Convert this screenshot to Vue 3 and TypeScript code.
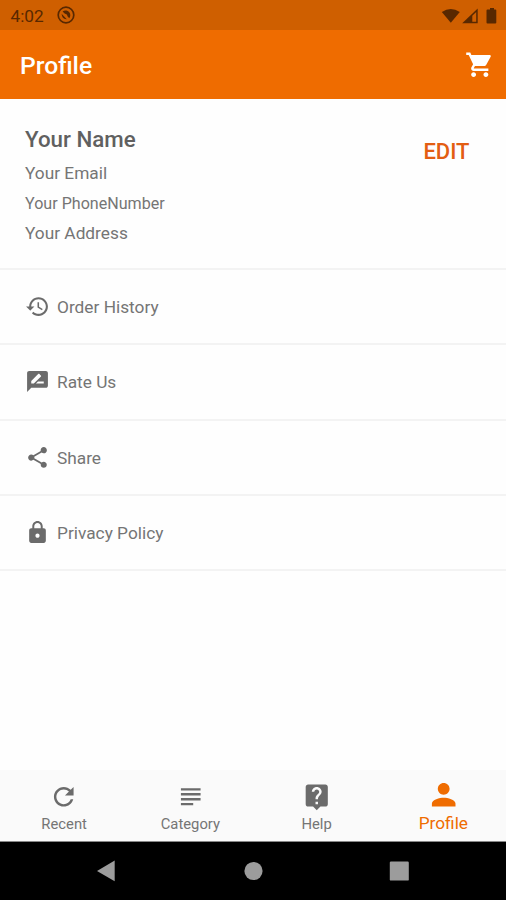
<script setup lang="ts">
interface Item { label: string; icon: string; name: string }

const menu: Item[] = [
  { name: 'history', label: 'Order History', icon: 'M13 3c-4.97 0-9 4.03-9 9H1l3.89 3.89.07.14L9 12H6c0-3.87 3.13-7 7-7s7 3.13 7 7-3.13 7-7 7c-1.93 0-3.68-.79-4.94-2.06l-1.42 1.42C8.27 19.99 10.51 21 13 21c4.97 0 9-4.03 9-9s-4.03-9-9-9zm-1 5v5l4.28 2.54.72-1.21-3.5-2.08V8H12z' },
  { name: 'rate', label: 'Rate Us', icon: 'M20 2H4c-1.1 0-1.99.9-1.99 2L2 22l4-4h14c1.1 0 2-.9 2-2V4c0-1.1-.9-2-2-2zM6 14v-2.47l6.88-6.88c.2-.2.51-.2.71 0l1.77 1.77c.2.2.2.51 0 .71L8.47 14H6zm12 0h-7.5l2-2H18v2z' },
  { name: 'share', label: 'Share', icon: 'M18 16.08c-.76 0-1.44.3-1.96.77L8.91 12.7c.05-.23.09-.46.09-.7s-.04-.47-.09-.7l7.05-4.11c.54.5 1.25.81 2.04.81 1.66 0 3-1.34 3-3s-1.34-3-3-3-3 1.34-3 3c0 .24.04.47.09.7L8.04 9.81C7.5 9.31 6.79 9 6 9c-1.66 0-3 1.34-3 3s1.34 3 3 3c.79 0 1.5-.31 2.04-.81l7.12 4.16c-.05.21-.08.43-.08.65 0 1.61 1.31 2.92 2.92 2.92s2.92-1.31 2.92-2.92-1.31-2.92-2.92-2.92z' },
  { name: 'privacy', label: 'Privacy Policy', icon: 'M18 8h-1V6c0-2.76-2.24-5-5-5S7 3.24 7 6v2H6c-1.1 0-2 .9-2 2v10c0 1.1.9 2 2 2h12c1.1 0 2-.9 2-2V10c0-1.1-.9-2-2-2zm-6 9c-1.1 0-2-.9-2-2s.9-2 2-2 2 .9 2 2-.9 2-2 2zm3.1-9H8.9V6c0-1.71 1.39-3.1 3.1-3.1 1.71 0 3.1 1.39 3.1 3.1v2z' },
]

const tabs: Item[] = [
  { name: 'recent', label: 'Recent', icon: 'M17.65 6.35C16.2 4.9 14.21 4 12 4c-4.42 0-7.99 3.58-7.99 8s3.57 8 7.99 8c3.73 0 6.84-2.55 7.73-6h-2.08c-.82 2.33-3.04 4-5.65 4-3.31 0-6-2.69-6-6s2.69-6 6-6c1.66 0 3.14.69 4.22 1.78L13 11h7V4l-2.35 2.35z' },
  { name: 'category', label: 'Category', icon: 'M14 17H4v2h10v-2zm6-8H4v2h16V9zM4 15h16v-2H4v2zM4 5v2h16V5H4z' },
  { name: 'help', label: 'Help', icon: 'M19 2H5c-1.11 0-2 .9-2 2v14c0 1.1.89 2 2 2h4l3 3 3-3h4c1.1 0 2-.9 2-2V4c0-1.1-.9-2-2-2zm-6 16h-2v-2h2v2zm2.07-7.75l-.9.92C13.45 11.9 13 12.5 13 14h-2v-.5c0-1.1.45-2.1 1.17-2.83l1.24-1.26c.37-.36.59-.86.59-1.41 0-1.1-.9-2-2-2s-2 .9-2 2H8c0-2.21 1.79-4 4-4s4 1.79 4 4c0 .88-.36 1.68-.93 2.25z' },
  { name: 'profile', label: 'Profile', icon: 'M12 12c2.21 0 4-1.79 4-4s-1.79-4-4-4-4 1.79-4 4 1.79 4 4 4zm0 2c-2.67 0-8 1.34-8 4v2h16v-2c0-2.66-5.33-4-8-4z' },
]
const active = 'profile'
</script>

<template>
  <div class="screen">
    <div class="status">
      <span class="clock">4:02</span>
      <svg class="notice" viewBox="0 0 18 18">
        <circle cx="9" cy="9" r="7.8" fill="none" stroke="currentColor" stroke-width="1.7" />
        <path d="M5.6 5.4C8.6 3.2 13.4 5.2 13.3 9.2Q13.3 10.8 12.3 12.2L10.8 10.8Q10.4 8.2 7.6 7.6ZM4.6 7.8L9.8 13.2Q5 13.6 4.6 7.8Z" fill="currentColor" />
      </svg>
      <svg class="signals" viewBox="0 0 56 18">
        <path d="M.8 5Q9.8 -1.2 18.8 5L9.8 15.8Z" fill="currentColor" />
        <path d="M36.7 1.5V16.3H21.2Z" fill="currentColor" />
        <path d="M31.3 8.8L35.2 5V14.8H31.3Z" class="signal-gap" />
        <path d="M46.5 2.6H49V1h4v1.6h1.5q.8 0 .8 1v12q0 1-1 1h-7.8q-1 0-1-1v-12q0-1 1-1Z" fill="currentColor" />
      </svg>
    </div>

    <header class="appbar">
      <h1>Profile</h1>
      <svg class="cart" viewBox="0 0 24 24"><path d="M7 18c-1.1 0-1.99.9-1.99 2S5.9 22 7 22s2-.9 2-2-.9-2-2-2zM1 2v2h2l3.6 7.59-1.35 2.45c-.16.28-.25.61-.25.96 0 1.1.9 2 2 2h12v-2H7.42c-.14 0-.25-.11-.25-.25l.03-.12.9-1.63h7.45c.75 0 1.41-.41 1.75-1.03l3.58-6.49c.08-.14.12-.31.12-.48 0-.55-.45-1-1-1H5.21l-.94-2H1zm16 16c-1.1 0-1.99.9-1.99 2s.89 2 1.99 2 2-.9 2-2-.9-2-2-2z" /></svg>
    </header>

    <section class="account">
      <div class="details">
        <h2>Your Name</h2>
        <p>Your Email</p>
        <p class="phone">Your PhoneNumber</p>
        <p>Your Address</p>
      </div>
      <button class="edit">EDIT</button>
    </section>

    <main class="menu">
      <div v-for="item in menu" :key="item.name" class="row">
        <svg viewBox="0 0 24 24"><path :d="item.icon" /></svg>
        <span>{{ item.label }}</span>
      </div>
    </main>

    <nav class="tabs">
      <div v-for="tab in tabs" :key="tab.name" class="tab" :class="{ active: tab.name === active }">
        <svg viewBox="0 0 24 24"><path :d="tab.icon" /></svg>
        <span>{{ tab.label }}</span>
      </div>
    </nav>

    <div class="system">
      <svg viewBox="0 0 20 22"><path d="M17.7 .6V21.2L0 10.9Z" /></svg>
      <svg viewBox="0 0 20 22"><circle cx="10.5" cy="11" r="9.1" /></svg>
      <svg viewBox="0 0 20 22"><rect x=".8" y="1.6" width="19" height="19" rx="1.2" /></svg>
    </div>
  </div>
</template>

<style>
body { margin: 0; }
</style>

<style scoped>
.screen {
  width: 506px;
  height: 900px;
  display: flex;
  flex-direction: column;
  background: #fefefe;
  color: #757575;
  font-family: Roboto, "Liberation Sans", sans-serif;
  font-size: 17.3px;
  overflow: hidden;
}
svg { display: block; flex: none; fill: currentColor; }
h1, h2, p { margin: 0; }
.status {
  height: 30px;
  box-sizing: border-box;
  padding: 0 9px 0 10.5px;
  display: flex;
  align-items: center;
  background: #cf5f00;
  color: #582800;
}
.clock { width: 46.5px; font-size: 17.2px; line-height: 30px; padding-top: 2px; }
.notice { width: 18px; height: 18px; }
.signals { width: 56px; height: 18px; margin: 1px 0 0 auto; }
.signal-gap { fill: #cf5f00; }
.appbar {
  height: 69px;
  box-sizing: border-box;
  padding: 0 12px 0 20px;
  display: flex;
  align-items: center;
  justify-content: space-between;
  background: #ef6c00;
  color: #fff;
}
.appbar h1 { font-size: 24.7px; font-weight: 500; line-height: 30px; padding-top: 2px; }
.cart { width: 29.5px; height: 29.5px; }
.account {
  height: 171px;
  box-sizing: border-box;
  padding: 25px 36.5px 0 25px;
  display: flex;
  justify-content: space-between;
  align-items: flex-start;
  border-bottom: 2px solid #f3f3f3;
}
.details h2 { font-size: 22.3px; font-weight: 500; line-height: 30px; color: #606060; padding-bottom: 4px; }
.details p { line-height: 30px; }
.details .phone { font-size: 16.1px; line-height: 31px; margin-bottom: -1px; }
.edit {
  margin: 13px 0 0;
  padding: 0;
  border: 0;
  background: none;
  color: #e35d12;
  font: 500 22px/30px Roboto, "Liberation Sans", sans-serif;
}
.menu { flex: 1; }
.row {
  height: 75.3px;
  box-sizing: border-box;
  padding-left: 25px;
  display: flex;
  align-items: center;
  gap: 7px;
  border-bottom: 2px solid #f3f3f3;
}
.row svg { width: 25px; height: 25px; color: #6b6b6b; }
.row span { padding-top: 1px; }
.tabs {
  height: 72px;
  box-sizing: border-box;
  padding-left: 1px;
  display: grid;
  grid-template-columns: repeat(4, 1fr);
  background: #fafafa;
  border-bottom: 1px solid #888;
}
.tab {
  display: flex;
  flex-direction: column;
  align-items: center;
  padding-top: 12.3px;
  font-size: 14.8px;
}
.tab svg { width: 29.5px; height: 29.5px; }
.tab:not(.active) svg { color: #6b6b6b; }
.tab span { line-height: 20px; margin-top: 2.2px; }
.tab.active { color: #ef6c00; padding: 7px 0 0 1px; font-size: 17.25px; }
.tab.active svg { width: 35.4px; height: 35.4px; }
.tab.active span { margin-top: .6px; }
.system {
  height: 58px;
  display: flex;
  justify-content: center;
  align-items: center;
  gap: 126px;
  background: #000;
  color: #9c9c9c;
}
.system svg { width: 20px; height: 22px; }
</style>
